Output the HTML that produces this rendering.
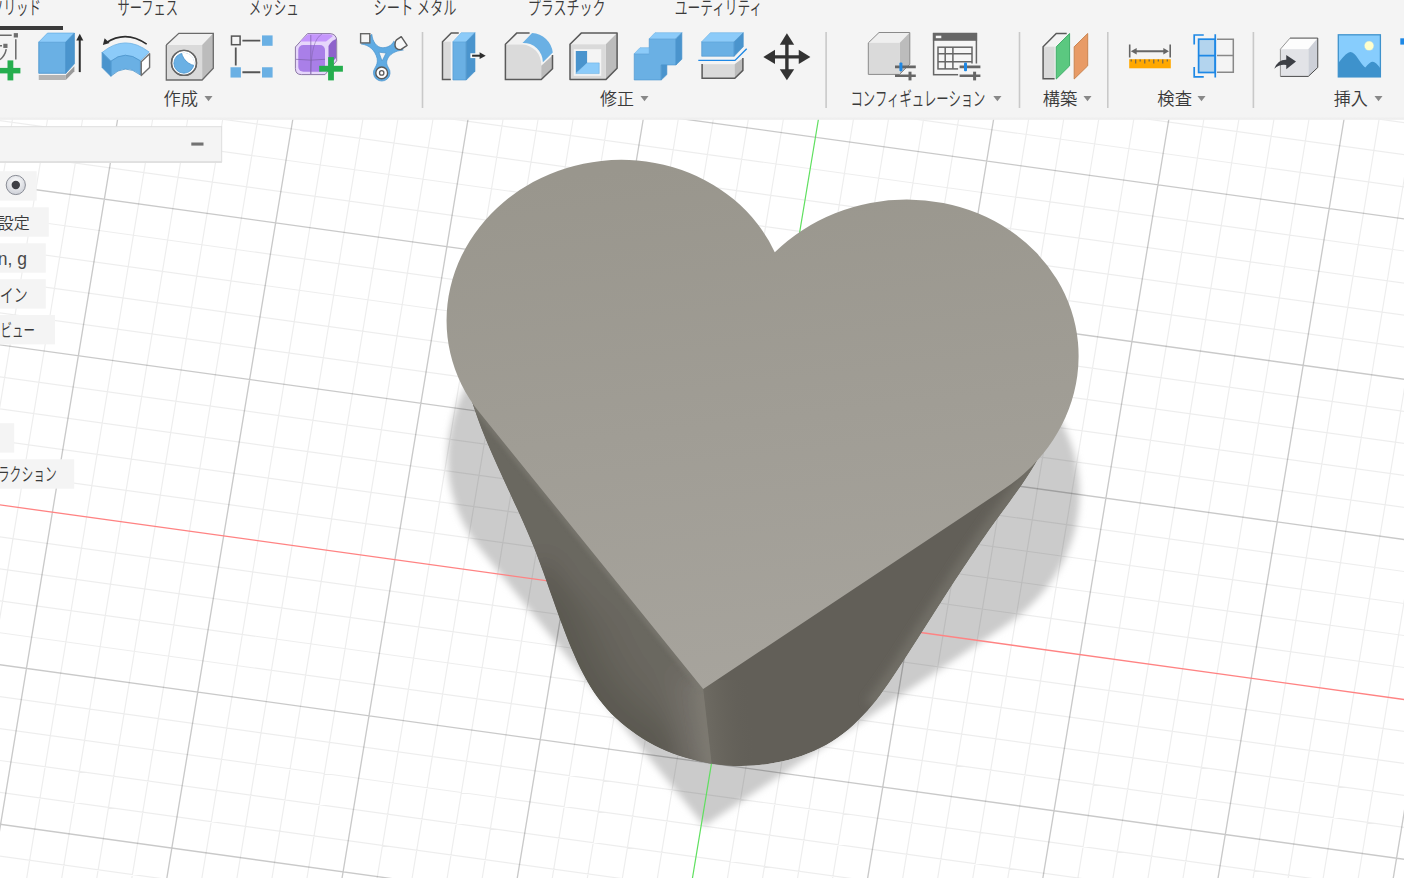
<!DOCTYPE html>
<html lang="ja"><head><meta charset="utf-8"><title>Fusion</title>
<style>html,body{margin:0;padding:0;background:#fff;overflow:hidden}svg{display:block}text{font-family:"Liberation Sans", "Noto Sans CJK JP", sans-serif;font-weight:350}</style></head><body>
<svg width="1404" height="878" viewBox="0 0 1404 878">
<defs>
<filter id="blur" x="-10%" y="-10%" width="120%" height="120%"><feGaussianBlur stdDeviation="3.8"/></filter>
<linearGradient id="topg" gradientUnits="userSpaceOnUse" x1="700" y1="160" x2="760" y2="690"><stop offset="0" stop-color="#99968d"/><stop offset="1" stop-color="#a7a49d"/></linearGradient>
<linearGradient id="sideL" gradientUnits="userSpaceOnUse" x1="520" y1="640" x2="705" y2="600"><stop offset="0" stop-color="#5d5a53"/><stop offset="0.25" stop-color="#6a675f"/><stop offset="0.8" stop-color="#6f6c64"/><stop offset="1" stop-color="#7a776f"/></linearGradient>
<linearGradient id="sideR" gradientUnits="userSpaceOnUse" x1="705" y1="700" x2="1000" y2="560"><stop offset="0" stop-color="#69665e"/><stop offset="0.3" stop-color="#625f58"/><stop offset="0.8" stop-color="#5f5c55"/><stop offset="1" stop-color="#6b6860"/></linearGradient>
<radialGradient id="radio" cx="0.5" cy="0.35" r="0.7"><stop offset="0" stop-color="#ffffff"/><stop offset="1" stop-color="#c9ccd4"/></radialGradient>
</defs>
<rect x="0.00" y="0.00" width="1404.00" height="878.00" fill="#ffffff"/>
<path d="M704.20 826.00 L480.53 549.58 A171.14 156.84 172.35 1 1 775.78 389.25 A160.45 176.63 82.21 1 1 1004.68 626.37 Z" fill="#cbcbcb" filter="url(#blur)"/>
<path d="M15.70 100L-114.28 883M50.74 100L-79.24 883M85.78 100L-44.20 883M155.86 100L25.88 883M190.90 100L60.92 883M225.94 100L95.96 883M260.98 100L131.00 883M331.06 100L201.08 883M366.10 100L236.12 883M401.14 100L271.16 883M436.18 100L306.20 883M506.26 100L376.28 883M541.30 100L411.32 883M576.34 100L446.36 883M611.38 100L481.40 883M681.46 100L551.48 883M716.50 100L586.52 883M751.54 100L621.56 883M786.58 100L656.60 883M856.66 100L726.68 883M891.70 100L761.72 883M926.74 100L796.76 883M961.78 100L831.80 883M1031.86 100L901.88 883M1066.90 100L936.92 883M1101.94 100L971.96 883M1136.98 100L1007.00 883M1207.06 100L1077.08 883M1242.10 100L1112.12 883M1277.14 100L1147.16 883M1312.18 100L1182.20 883M1382.26 100L1252.28 883M1417.30 100L1287.32 883M1452.34 100L1322.36 883M1487.38 100L1357.40 883M-5 -72.73L1409 123.25M-5 -40.61L1409 155.37M-5 -8.50L1409 187.48M-5 55.70L1409 251.68M-5 87.79L1409 283.77M-5 119.87L1409 315.85M-5 151.94L1409 347.92M-5 216.06L1409 412.04M-5 248.11L1409 444.09M-5 280.15L1409 476.13M-5 312.18L1409 508.16M-5 376.22L1409 572.20M-5 408.23L1409 604.21M-5 440.23L1409 636.21M-5 472.22L1409 668.20M-5 536.18L1409 732.16M-5 568.15L1409 764.13M-5 600.11L1409 796.09M-5 632.06L1409 828.04M-5 695.94L1409 891.92M-5 727.87L1409 923.85M-5 759.79L1409 955.77M-5 791.70L1409 987.68M-5 855.50L1409 1051.48" stroke="#000" stroke-opacity="0.07" stroke-width="1.2" fill="none"/>
<path d="M120.82 100L-9.16 883M296.02 100L166.04 883M471.22 100L341.24 883M646.42 100L516.44 883M996.82 100L866.84 883M1172.02 100L1042.04 883M1347.22 100L1217.24 883M1522.42 100L1392.44 883M-5 23.61L1409 219.59M-5 184.01L1409 379.99M-5 344.21L1409 540.19M-5 664.01L1409 859.99M-5 823.61L1409 1019.59" stroke="#000" stroke-opacity="0.21" stroke-width="1.35" fill="none"/>
<line x1="-5.00" y1="504.21" x2="1409.00" y2="700.19" stroke="#ff8383" stroke-width="1.3"/>
<line x1="821.62" y1="100.00" x2="691.64" y2="883.00" stroke="#5fe05f" stroke-width="1.2"/>
<clipPath id="clipB"><path d="M530.00 430.00 L470.50 396.00 L470.43 396.00 C471.11 398.18 473.08 404.74 474.52 409.07 C475.96 413.39 477.49 417.69 479.06 421.96 C480.64 426.23 482.29 430.48 483.98 434.71 C485.67 438.93 487.42 443.14 489.20 447.33 C490.98 451.52 492.82 455.70 494.67 459.86 C496.51 464.03 498.40 468.18 500.30 472.32 C502.19 476.47 504.11 480.60 506.03 484.74 C507.94 488.88 509.88 493.01 511.79 497.14 C513.70 501.28 515.62 505.41 517.51 509.55 C519.40 513.69 521.29 517.84 523.13 522.00 C524.97 526.15 526.80 530.32 528.57 534.50 C530.34 538.68 532.08 542.88 533.77 547.09 C535.45 551.31 537.08 555.54 538.69 559.78 C540.30 564.03 541.86 568.29 543.41 572.56 C544.96 576.83 546.48 581.11 548.00 585.39 C549.53 589.68 551.03 593.98 552.55 598.27 C554.08 602.57 555.59 606.87 557.14 611.17 C558.69 615.47 560.25 619.77 561.85 624.07 C563.46 628.36 565.08 632.66 566.77 636.94 C568.45 641.23 570.16 645.52 571.96 649.77 C573.76 654.02 575.61 658.27 577.56 662.44 C579.51 666.61 581.53 670.76 583.69 674.80 C585.84 678.84 588.09 682.83 590.48 686.68 C592.88 690.54 595.40 694.31 598.08 697.93 C600.76 701.55 603.60 705.04 606.58 708.40 C609.55 711.75 612.68 714.97 615.93 718.05 C619.18 721.13 622.58 724.07 626.08 726.87 C629.58 729.67 633.21 732.33 636.93 734.84 C640.66 737.35 644.50 739.72 648.42 741.94 C652.34 744.16 656.37 746.24 660.47 748.16 C664.57 750.08 668.76 751.86 673.00 753.48 C677.25 755.09 681.57 756.56 685.94 757.87 C690.31 759.18 694.75 760.34 699.22 761.34 C703.69 762.33 708.21 763.17 712.75 763.85 C717.29 764.52 721.87 765.04 726.46 765.39 C731.05 765.74 735.67 765.92 740.28 765.94 C744.89 765.96 749.53 765.81 754.13 765.49 C758.74 765.17 763.36 764.69 767.93 764.03 C772.50 763.37 777.06 762.54 781.56 761.54 C786.05 760.54 790.52 759.38 794.90 758.04 C799.28 756.70 803.62 755.19 807.84 753.51 C812.07 751.83 816.23 749.98 820.27 747.96 C824.30 745.94 828.25 743.75 832.05 741.39 C835.85 739.02 839.54 736.48 843.08 733.79 C846.62 731.09 850.02 728.21 853.30 725.20 C856.59 722.20 859.74 719.03 862.81 715.77 C865.88 712.51 868.83 709.10 871.71 705.63 C874.59 702.15 877.37 698.56 880.11 694.92 C882.84 691.28 885.49 687.54 888.11 683.78 C890.73 680.03 893.28 676.20 895.82 672.37 C898.36 668.55 900.86 664.68 903.35 660.82 C905.85 656.97 908.32 653.11 910.80 649.26 C913.27 645.41 915.73 641.56 918.19 637.71 C920.64 633.87 923.09 630.02 925.54 626.18 C927.99 622.34 930.44 618.51 932.88 614.68 C935.33 610.85 937.78 607.02 940.23 603.20 C942.68 599.38 945.13 595.57 947.59 591.76 C950.06 587.95 952.52 584.15 955.00 580.35 C957.48 576.56 959.96 572.77 962.46 568.99 C964.97 565.21 967.48 561.44 970.01 557.68 C972.54 553.92 975.08 550.17 977.65 546.42 C980.21 542.68 982.79 538.95 985.40 535.22 C988.01 531.50 990.63 527.79 993.29 524.09 C995.94 520.38 998.63 516.70 1001.32 513.01 C1004.01 509.33 1006.74 505.66 1009.43 501.96 C1012.12 498.27 1014.82 494.58 1017.45 490.85 C1020.08 487.12 1022.70 483.37 1025.22 479.58 C1027.74 475.78 1030.23 471.95 1032.59 468.06 C1034.94 464.16 1038.25 458.18 1039.38 456.20 L990.00 450.00 Z"/></clipPath>
<clipPath id="clipL"><path d="M0 100H636.35L727.15 900H0Z"/></clipPath>
<clipPath id="clipR"><path d="M1404 100H636.35L727.15 900H1404Z"/></clipPath>
<filter id="b6" filterUnits="userSpaceOnUse" x="380" y="330" width="760" height="520"><feGaussianBlur stdDeviation="6"/></filter>
<filter id="b12" filterUnits="userSpaceOnUse" x="380" y="330" width="760" height="520"><feGaussianBlur stdDeviation="13"/></filter>
<filter id="b4" filterUnits="userSpaceOnUse" x="380" y="330" width="760" height="520"><feGaussianBlur stdDeviation="4"/></filter>
<filter id="b2" filterUnits="userSpaceOnUse" x="380" y="330" width="760" height="520"><feGaussianBlur stdDeviation="2"/></filter>
<linearGradient id="bandL" gradientUnits="userSpaceOnUse" x1="707.3" y1="725" x2="655.3" y2="731"><stop offset="0" stop-color="#7d7a72" stop-opacity="1"/><stop offset="0.35" stop-color="#76736b" stop-opacity="0.75"/><stop offset="1" stop-color="#6c6961" stop-opacity="0"/></linearGradient>
<linearGradient id="bandR" gradientUnits="userSpaceOnUse" x1="707.3" y1="725" x2="753.3" y2="721"><stop offset="0" stop-color="#6d6a62" stop-opacity="1"/><stop offset="0.4" stop-color="#68655d" stop-opacity="0.7"/><stop offset="1" stop-color="#625f58" stop-opacity="0"/></linearGradient>
<g clip-path="url(#clipB)">
<path d="M530.00 430.00 L470.50 396.00 L470.43 396.00 C471.11 398.18 473.08 404.74 474.52 409.07 C475.96 413.39 477.49 417.69 479.06 421.96 C480.64 426.23 482.29 430.48 483.98 434.71 C485.67 438.93 487.42 443.14 489.20 447.33 C490.98 451.52 492.82 455.70 494.67 459.86 C496.51 464.03 498.40 468.18 500.30 472.32 C502.19 476.47 504.11 480.60 506.03 484.74 C507.94 488.88 509.88 493.01 511.79 497.14 C513.70 501.28 515.62 505.41 517.51 509.55 C519.40 513.69 521.29 517.84 523.13 522.00 C524.97 526.15 526.80 530.32 528.57 534.50 C530.34 538.68 532.08 542.88 533.77 547.09 C535.45 551.31 537.08 555.54 538.69 559.78 C540.30 564.03 541.86 568.29 543.41 572.56 C544.96 576.83 546.48 581.11 548.00 585.39 C549.53 589.68 551.03 593.98 552.55 598.27 C554.08 602.57 555.59 606.87 557.14 611.17 C558.69 615.47 560.25 619.77 561.85 624.07 C563.46 628.36 565.08 632.66 566.77 636.94 C568.45 641.23 570.16 645.52 571.96 649.77 C573.76 654.02 575.61 658.27 577.56 662.44 C579.51 666.61 581.53 670.76 583.69 674.80 C585.84 678.84 588.09 682.83 590.48 686.68 C592.88 690.54 595.40 694.31 598.08 697.93 C600.76 701.55 603.60 705.04 606.58 708.40 C609.55 711.75 612.68 714.97 615.93 718.05 C619.18 721.13 622.58 724.07 626.08 726.87 C629.58 729.67 633.21 732.33 636.93 734.84 C640.66 737.35 644.50 739.72 648.42 741.94 C652.34 744.16 656.37 746.24 660.47 748.16 C664.57 750.08 668.76 751.86 673.00 753.48 C677.25 755.09 681.57 756.56 685.94 757.87 C690.31 759.18 694.75 760.34 699.22 761.34 C703.69 762.33 708.21 763.17 712.75 763.85 C717.29 764.52 721.87 765.04 726.46 765.39 C731.05 765.74 735.67 765.92 740.28 765.94 C744.89 765.96 749.53 765.81 754.13 765.49 C758.74 765.17 763.36 764.69 767.93 764.03 C772.50 763.37 777.06 762.54 781.56 761.54 C786.05 760.54 790.52 759.38 794.90 758.04 C799.28 756.70 803.62 755.19 807.84 753.51 C812.07 751.83 816.23 749.98 820.27 747.96 C824.30 745.94 828.25 743.75 832.05 741.39 C835.85 739.02 839.54 736.48 843.08 733.79 C846.62 731.09 850.02 728.21 853.30 725.20 C856.59 722.20 859.74 719.03 862.81 715.77 C865.88 712.51 868.83 709.10 871.71 705.63 C874.59 702.15 877.37 698.56 880.11 694.92 C882.84 691.28 885.49 687.54 888.11 683.78 C890.73 680.03 893.28 676.20 895.82 672.37 C898.36 668.55 900.86 664.68 903.35 660.82 C905.85 656.97 908.32 653.11 910.80 649.26 C913.27 645.41 915.73 641.56 918.19 637.71 C920.64 633.87 923.09 630.02 925.54 626.18 C927.99 622.34 930.44 618.51 932.88 614.68 C935.33 610.85 937.78 607.02 940.23 603.20 C942.68 599.38 945.13 595.57 947.59 591.76 C950.06 587.95 952.52 584.15 955.00 580.35 C957.48 576.56 959.96 572.77 962.46 568.99 C964.97 565.21 967.48 561.44 970.01 557.68 C972.54 553.92 975.08 550.17 977.65 546.42 C980.21 542.68 982.79 538.95 985.40 535.22 C988.01 531.50 990.63 527.79 993.29 524.09 C995.94 520.38 998.63 516.70 1001.32 513.01 C1004.01 509.33 1006.74 505.66 1009.43 501.96 C1012.12 498.27 1014.82 494.58 1017.45 490.85 C1020.08 487.12 1022.70 483.37 1025.22 479.58 C1027.74 475.78 1030.23 471.95 1032.59 468.06 C1034.94 464.16 1038.25 458.18 1039.38 456.20 L990.00 450.00 Z" fill="#625f58"/>
<path d="M871.7 705.6 L880.1 694.9 L888.1 683.8 L895.8 672.4 L903.4 660.8 L910.8 649.3 L918.2 637.7 L925.5 626.2 L932.9 614.7 L940.2 603.2 L947.6 591.8 L955.0 580.4 L962.5 569.0 L970.0 557.7 L977.6 546.4 L985.4 535.2 L993.3 524.1 L1001.3 513.0 L1009.4 502.0 L1017.4 490.8 L1025.2 479.6 L1032.6 468.1 L1039.4 456.2" fill="none" stroke="#716e66" stroke-width="16" filter="url(#b4)" clip-path="url(#clipR)"/>
<rect x="701.2" y="680" width="60" height="100" fill="url(#bandR)" clip-path="url(#clipR)"/>
<g clip-path="url(#clipL)">
<g filter="url(#b12)">
<rect x="380" y="330" width="760" height="520" fill="#6b6860"/>
<path d="M572.0 649.8 L577.6 662.4 L583.7 674.8 L590.5 686.7 L598.1 697.9 L606.6 708.4 L615.9 718.1 L626.1 726.9 L636.9 734.8 L648.4 741.9 L660.5 748.2 L673.0 753.5 L685.9 757.9 L699.2 761.3" fill="none" stroke="#66635b" stroke-width="100" stroke-linejoin="round" stroke-linecap="round"/>
<path d="M557.1 611.2 L561.9 624.1 L566.8 636.9 L572.0 649.8 L577.6 662.4 L583.7 674.8 L590.5 686.7 L598.1 697.9 L606.6 708.4 L615.9 718.1 L626.1 726.9 L636.9 734.8 L648.4 741.9 L660.5 748.2 L673.0 753.5 L685.9 757.9 L699.2 761.3" fill="none" stroke="#615e57" stroke-width="56" stroke-linejoin="round" stroke-linecap="round"/>
<path d="M543.4 572.6 L548.0 585.4 L552.6 598.3 L557.1 611.2 L561.9 624.1 L566.8 636.9 L572.0 649.8 L577.6 662.4 L583.7 674.8 L590.5 686.7 L598.1 697.9 L606.6 708.4 L615.9 718.1 L626.1 726.9 L636.9 734.8 L648.4 741.9 L660.5 748.2 L673.0 753.5 L685.9 757.9 L699.2 761.3" fill="none" stroke="#5a5750" stroke-width="24" stroke-linejoin="round" stroke-linecap="round"/>
<path d="M701.6 675.0 L712.3 769.0" fill="none" stroke="#74716a" stroke-width="60"/>
</g>
<g filter="url(#b4)">
<path d="M702.3 681.0 L712.3 769.0" fill="none" stroke="#7a776f" stroke-width="26" opacity="0.75"/>
<path d="M702.7 685.0 L712.3 769.0" fill="none" stroke="#7e7b73" stroke-width="9" opacity="0.9"/>
</g>
<path d="M462 390 L703.2 689.0" fill="none" stroke="#7d7a72" stroke-width="8" filter="url(#b2)" opacity="0.7"/>
</g></g>
<path d="M703.20 689.00 L479.53 412.58 A171.14 156.84 172.35 1 1 774.78 252.25 A160.45 176.63 82.21 1 1 1003.68 489.37 Z" fill="url(#topg)"/>
<rect x="-1.00" y="126.70" width="222.70" height="35.00" fill="#f4f4f4" stroke="#dedede" stroke-width="1"/>
<rect x="-1.00" y="161.10" width="222.90" height="1.90" fill="#e0e0e0"/>
<rect x="191.30" y="142.50" width="12.20" height="3.10" fill="#727272"/>
<rect x="0.00" y="171.20" width="36.70" height="29.40" fill="#f4f4f4"/>
<rect x="0.00" y="207.30" width="48.80" height="29.40" fill="#f4f4f4"/>
<rect x="0.00" y="243.30" width="45.80" height="29.40" fill="#f4f4f4"/>
<rect x="0.00" y="279.20" width="45.80" height="29.40" fill="#f4f4f4"/>
<rect x="0.00" y="315.00" width="55.00" height="29.40" fill="#f4f4f4"/>
<rect x="0.00" y="423.20" width="14.20" height="29.40" fill="#f4f4f4"/>
<rect x="0.00" y="459.30" width="74.20" height="29.40" fill="#f4f4f4"/>
<circle cx="15.8" cy="185" r="9.6" fill="url(#radio)" stroke="#8a8d96" stroke-width="1"/>
<circle cx="15.8" cy="185" r="4.2" fill="#3f4046"/>
<text x="29.7" y="229.0" font-size="16" fill="#3a3a3a" text-anchor="end">設定</text>
<text x="26.9" y="264.8" font-size="17.5" fill="#484848" text-anchor="end">n, g</text>
<text x="27.7" y="301.8" font-size="18.5" fill="#3a3a3a" text-anchor="end" textLength="42.0" lengthAdjust="spacingAndGlyphs">ザイン</text>
<text x="35.0" y="337.0" font-size="18.5" fill="#3a3a3a" text-anchor="end" textLength="34.5" lengthAdjust="spacingAndGlyphs">ビュー</text>
<text x="56.8" y="481.3" font-size="18.5" fill="#3a3a3a" text-anchor="end" textLength="59.0" lengthAdjust="spacingAndGlyphs">ラクション</text>
<rect x="0.00" y="0.00" width="1404.00" height="119.60" fill="#f4f4f4"/>
<linearGradient id="tbsh" x1="0" y1="0" x2="0" y2="1"><stop offset="0" stop-color="#f4f4f4"/><stop offset="1" stop-color="#ececec"/></linearGradient>
<rect x="0.00" y="116.50" width="1404.00" height="3.10" fill="url(#tbsh)"/>
<rect x="0.00" y="26.00" width="63.00" height="4.00" fill="#3a3a3a"/>
<text x="41.0" y="15.4" font-size="19" fill="#3a3a3a" text-anchor="end" textLength="50.0" lengthAdjust="spacingAndGlyphs">ソリッド</text>
<text x="117.5" y="15.4" font-size="19" fill="#3a3a3a" text-anchor="start" textLength="60.5" lengthAdjust="spacingAndGlyphs">サーフェス</text>
<text x="248.8" y="15.4" font-size="19" fill="#3a3a3a" text-anchor="start" textLength="50.0" lengthAdjust="spacingAndGlyphs">メッシュ</text>
<text x="373.5" y="15.4" font-size="19" fill="#3a3a3a" text-anchor="start" textLength="83.0" lengthAdjust="spacingAndGlyphs">シート メタル</text>
<text x="527.7" y="15.4" font-size="19" fill="#3a3a3a" text-anchor="start" textLength="77.7" lengthAdjust="spacingAndGlyphs">プラスチック</text>
<text x="674.8" y="15.4" font-size="19" fill="#3a3a3a" text-anchor="start" textLength="87.4" lengthAdjust="spacingAndGlyphs">ユーティリティ</text>
<path d="M422.5 32V108" stroke="#c9c9c9" stroke-width="1.6"/>
<path d="M826.1 32V108" stroke="#c9c9c9" stroke-width="1.6"/>
<path d="M1019.5 32V108" stroke="#c9c9c9" stroke-width="1.6"/>
<path d="M1107.8 32V108" stroke="#c9c9c9" stroke-width="1.6"/>
<path d="M1253.4 32V108" stroke="#c9c9c9" stroke-width="1.6"/>
<text x="163.5" y="105.0" font-size="17" fill="#3a3a3a" text-anchor="start" textLength="34.5" lengthAdjust="spacingAndGlyphs">作成</text>
<polygon points="204.50,96.00 212.50,96.00 208.50,101.30" fill="#888"/>
<text x="600.0" y="105.0" font-size="17" fill="#3a3a3a" text-anchor="start" textLength="34.0" lengthAdjust="spacingAndGlyphs">修正</text>
<polygon points="640.50,96.00 648.50,96.00 644.50,101.30" fill="#888"/>
<text x="850.5" y="105.6" font-size="19.5" fill="#3a3a3a" text-anchor="start" textLength="135.0" lengthAdjust="spacingAndGlyphs">コンフィギュレーション</text>
<polygon points="993.30,96.00 1001.50,96.00 997.40,101.30" fill="#888"/>
<text x="1042.8" y="105.0" font-size="17" fill="#3a3a3a" text-anchor="start" textLength="34.6" lengthAdjust="spacingAndGlyphs">構築</text>
<polygon points="1083.50,96.00 1091.50,96.00 1087.50,101.30" fill="#888"/>
<text x="1157.3" y="105.0" font-size="17" fill="#3a3a3a" text-anchor="start" textLength="34.7" lengthAdjust="spacingAndGlyphs">検査</text>
<polygon points="1197.50,96.00 1205.50,96.00 1201.50,101.30" fill="#888"/>
<text x="1333.7" y="105.0" font-size="17" fill="#3a3a3a" text-anchor="start" textLength="34.1" lengthAdjust="spacingAndGlyphs">挿入</text>
<polygon points="1374.50,96.00 1382.50,96.00 1378.50,101.30" fill="#888"/>
<path d="M0 35.3H11.7M15.8 39.2V59.6M0 45.8H2" stroke="#6a6a6a" stroke-width="1.5" fill="none"/>
<path d="M6.25 49.2Q5 56 0 59.6" stroke="#6a6a6a" stroke-width="1.5" fill="none"/>
<rect x="13.75" y="33.10" width="4.20" height="4.40" fill="#6f6f6f"/>
<rect x="3.30" y="43.75" width="4.20" height="4.20" fill="#6f6f6f"/>
<rect x="0.00" y="67.90" width="20.40" height="5.50" fill="#25ae4e"/>
<rect x="7.50" y="60.40" width="5.80" height="20.00" fill="#25ae4e"/>
<polygon points="38.75,75.00 65.80,75.00 65.80,80.00 38.75,80.00" fill="#b4b4b4"/>
<polygon points="65.80,75.00 74.40,66.25 74.40,71.25 65.80,80.00" fill="#9a9a9a"/>
<polygon points="38.75,42.10 65.80,42.10 65.80,73.30 38.75,73.30" fill="#6ab0e4" stroke="#4a94cd" stroke-width="0.8" stroke-linejoin="round"/>
<polygon points="38.75,42.10 47.50,33.10 74.40,33.10 65.80,42.10" fill="#8ccbf9" stroke="#6ab0e4" stroke-width="0.8" stroke-linejoin="round"/>
<polygon points="65.80,42.10 74.40,33.10 74.40,63.75 65.80,73.30" fill="#4a94cd" stroke="#4a94cd" stroke-width="0.8" stroke-linejoin="round"/>
<path d="M79.75 39.5V72.1" stroke="#2d2d2d" stroke-width="2"/>
<polygon points="79.75,33.75 76.25,40.40 83.30,40.40" fill="#2d2d2d"/>
<path d="M146.7 44.2Q126 29.8 106 42.8" stroke="#2d2d2d" stroke-width="1.6" fill="none"/>
<polygon points="102.90,45.00 104.60,38.30 109.60,42.90" fill="#2d2d2d"/>
<path d="M102.1 52.5Q125 33.5 149.2 52.1L140.4 60.8Q125 49.5 110.8 61.25Z" fill="#8ccbf9" stroke="#6ab0e4" stroke-width="0.8"/>
<path d="M110.8 61.25Q125 49.5 140.4 60.8V75Q125 62.5 110.8 76.25Z" fill="#6ab0e4" stroke="#4a94cd" stroke-width="0.8"/>
<polygon points="102.10,52.50 110.80,61.25 110.80,76.25 102.10,67.50" fill="#4a94cd" stroke="#4a94cd" stroke-width="0.8" stroke-linejoin="round"/>
<polygon points="141.25,61.70 149.60,53.75 149.60,67.50 141.25,75.40" fill="#ffffff" stroke="#6f6f6f" stroke-width="1.4" stroke-linejoin="round"/>
<polygon points="166.30,45.00 178.80,33.30 213.30,33.30 202.10,45.00" fill="#f1f1f1"/>
<polygon points="202.10,45.00 213.30,33.30 213.30,68.30 202.10,80.00" fill="#bcbcbc"/>
<polygon points="166.30,45.00 202.10,45.00 202.10,80.00 166.30,80.00" fill="#dadada"/>
<polyline points="166.30,45.00 178.80,33.30 213.30,33.30 213.30,68.30 202.10,80.00 166.30,80.00 166.30,45.00" fill="none" stroke="#6a6a6a" stroke-width="1.3" stroke-linejoin="miter"/>
<circle cx="184" cy="62.9" r="12.5" fill="#fff" stroke="#666" stroke-width="1.4"/>
<clipPath id="holec"><circle cx="183.9" cy="63.2" r="10.5"/></clipPath>
<circle cx="183.9" cy="63.2" r="10.0" fill="#6ab0e4" stroke="#4a94cd" stroke-width="0.8"/>
<circle cx="197.8" cy="49.2" r="16.7" fill="#fff" stroke="#4a94cd" stroke-width="0.8" clip-path="url(#holec)"/>
<circle cx="184" cy="62.9" r="12.5" fill="none" stroke="#666" stroke-width="1.4"/>
<rect x="231.50" y="36.10" width="8.60" height="8.60" fill="#f5f5f5" stroke="#555" stroke-width="1.5"/>
<rect x="262.00" y="35.40" width="10.60" height="10.40" fill="#6ab0e4"/>
<rect x="230.50" y="67.25" width="10.40" height="10.30" fill="#6ab0e4"/>
<rect x="262.00" y="67.25" width="10.60" height="10.30" fill="#6ab0e4"/>
<path d="M242.4 40.6H260.3M235.75 47.5V65.4M242.4 72.25H260.3" stroke="#555" stroke-width="1.8" fill="none"/>
<path d="M295.4 47L307.5 33.6H330Q336.7 34 336.7 41V60.8L325 74.6H301.5Q295.4 74.6 295.4 68.5Z" fill="#e6d6fb" stroke="#8b78a4" stroke-width="1"/>
<path d="M300 41.5L308 34.2H329Q331 34.3 333 36L326 41.5Z" fill="#c596fd"/>
<path d="M328.5 46Q331 41 336 39V58L328.5 66Z" fill="#8d62cb"/>
<rect x="298.30" y="45.00" width="26.70" height="26.70" fill="#a97fe8" rx="5"/>
<path d="M310.8 35V74M296 59.3Q311 61 325 59.3" stroke="#7d62a8" stroke-width="0.9" fill="none" opacity="0.8"/>
<path d="M310.8 74Q311 40 322 34" stroke="#7d62a8" stroke-width="0.9" fill="none" opacity="0.6"/>
<rect x="319.20" y="65.80" width="23.70" height="5.90" fill="#25ae4e"/>
<rect x="328.10" y="57.10" width="5.80" height="23.30" fill="#25ae4e"/>
<path fill-rule="evenodd" d="M361.25 44C369.17 45 375 50 377.08 58.33C377.92 62.5 376.67 65 375 67.92A8.3 8.3 0 1 0 388.5 67.92C386.67 65 386.25 62.5 387.08 60C389.17 54.17 395 50.83 403.33 50L393.75 41.25C391.67 45.83 386.67 47.92 382.08 47.67C376.67 47.33 372.5 41.67 371.83 34.33ZM378.9 52.2L386.1 53L382.1 61Z" fill="#5fabe3" stroke="#4a94cd" stroke-width="0.7"/>
<rect x="360.60" y="33.70" width="9.20" height="9.20" fill="#f5f5f5" stroke="#666" stroke-width="1.4"/>
<path d="M401.25 36.7L407.1 45.4L400.8 49.6Q394.5 49.5 395 44.2Q395.2 41 396.5 39.8Z" fill="#f8f8f8" stroke="#5a5a5a" stroke-width="1.4" stroke-linejoin="round"/>
<circle cx="381.7" cy="72.9" r="5.9" fill="#fff" stroke="#5a5a5a" stroke-width="1.4"/>
<circle cx="381.7" cy="72.9" r="2.2" fill="#fff" stroke="#5a5a5a" stroke-width="1.3"/>
<polygon points="443.20,41.70 451.25,33.50 458.75,33.50 451.00,41.70" fill="#f1f1f1"/>
<rect x="443.20" y="41.70" width="7.60" height="37.90" fill="#dadada"/>
<polyline points="450.80,79.60 442.50,79.60 442.50,41.70 451.25,32.90 458.75,32.90" fill="none" stroke="#5a5a5a" stroke-width="1.5" stroke-linejoin="miter"/>
<polygon points="452.90,41.70 466.25,41.70 466.25,80.00 452.90,80.00" fill="#6ab0e4" stroke="#4a94cd" stroke-width="0.6" stroke-linejoin="round"/>
<polygon points="452.90,41.70 461.25,32.70 475.00,32.70 466.25,41.70" fill="#8ccbf9" stroke="#6ab0e4" stroke-width="0.6" stroke-linejoin="round"/>
<polygon points="466.25,41.70 475.00,32.70 475.00,71.25 466.25,80.00" fill="#4a94cd" stroke="#4a94cd" stroke-width="0.6" stroke-linejoin="round"/>
<rect x="470.40" y="53.30" width="5.50" height="4.80" fill="#fafafa"/>
<path d="M472.1 55.7H480.5" stroke="#2d2d2d" stroke-width="2"/>
<polygon points="479.60,52.30 485.70,55.70 479.60,59.00" fill="#2d2d2d"/>
<polygon points="505.40,44.30 516.70,33.10 532.00,33.10 522.50,44.30" fill="#f1f1f1"/>
<path d="M505.4 44.6H522.5A19.5 20 0 0 1 541.25 65V79.6H505.4Z" fill="#dadada"/>
<polygon points="541.25,65.80 552.50,55.40 552.50,68.75 541.25,79.60" fill="#bcbcbc"/>
<path d="M522.5 42.9L532.1 32.9A22 22 0 0 1 552.75 52.5L542.9 62.3A19.5 19.5 0 0 0 522.5 42.9Z" fill="#6ab0e4"/>
<polyline points="529.60,33.10 516.70,33.10 505.40,44.30 505.40,79.60 541.25,79.60 552.50,68.75 552.50,55.00" fill="none" stroke="#5a5a5a" stroke-width="1.5" stroke-linejoin="miter"/>
<polygon points="570.00,44.30 581.25,33.10 617.10,33.10 605.80,44.30" fill="#f1f1f1"/>
<polygon points="605.80,44.30 617.10,33.10 617.10,68.30 605.80,79.60" fill="#bcbcbc"/>
<rect x="570.00" y="44.30" width="35.80" height="35.30" fill="#dadada"/>
<rect x="573.75" y="49.20" width="27.50" height="26.60" fill="#f4f4f4"/>
<polygon points="575.80,51.00 587.10,51.00 587.10,62.90 575.80,73.60" fill="#4a94cd"/>
<polygon points="587.10,62.90 599.20,62.90 599.20,73.60 575.80,73.60" fill="#8ccbf9" stroke="#6ab0e4" stroke-width="0.6" stroke-linejoin="round"/>
<polygon points="570.00,44.30 581.25,33.10 617.10,33.10 617.10,68.30 605.80,79.60 570.00,79.60" fill="none" stroke="#5a5a5a" stroke-width="1.5" stroke-linejoin="round"/>
<polygon points="634.20,53.75 649.20,53.75 649.20,38.75 676.00,38.75 676.00,65.00 661.25,65.00 661.25,80.00 634.20,80.00" fill="#6ab0e4" stroke="#4a94cd" stroke-width="0.6" stroke-linejoin="round"/>
<polygon points="649.20,38.75 655.00,32.70 681.90,32.70 676.00,38.75" fill="#8ccbf9" stroke="#6ab0e4" stroke-width="0.6" stroke-linejoin="round"/>
<polygon points="634.20,53.75 640.00,47.70 649.20,47.70 649.20,53.75" fill="#8ccbf9" stroke="#6ab0e4" stroke-width="0.6" stroke-linejoin="round"/>
<polygon points="676.00,38.75 681.90,32.70 681.90,59.20 676.00,65.00" fill="#4a94cd" stroke="#4a94cd" stroke-width="0.6" stroke-linejoin="round"/>
<polygon points="661.25,65.00 666.90,65.00 666.90,74.60 661.25,80.00" fill="#4a94cd" stroke="#4a94cd" stroke-width="0.6" stroke-linejoin="round"/>
<polygon points="701.70,41.70 734.20,41.70 734.20,56.25 701.70,56.25" fill="#6ab0e4" stroke="#4a94cd" stroke-width="0.6" stroke-linejoin="round"/>
<polygon points="701.70,41.70 710.40,32.70 743.30,32.70 734.20,41.70" fill="#8ccbf9" stroke="#6ab0e4" stroke-width="0.6" stroke-linejoin="round"/>
<polygon points="734.20,41.70 743.30,32.70 743.30,46.70 734.20,56.25" fill="#4a94cd" stroke="#4a94cd" stroke-width="0.6" stroke-linejoin="round"/>
<polyline points="698.30,60.40 735.00,60.40 746.70,48.75" fill="none" stroke="#1e88e5" stroke-width="1.4" stroke-linejoin="miter"/>
<rect x="702.10" y="64.20" width="32.50" height="14.10" fill="#dadada"/>
<polygon points="734.60,64.20 742.90,57.90 742.90,70.40 734.60,78.30" fill="#bcbcbc"/>
<polyline points="702.10,64.00 702.10,78.30 734.80,78.30 742.90,70.40 742.90,58.00" fill="none" stroke="#5a5a5a" stroke-width="1.5" stroke-linejoin="miter"/>
<path d="M786.9 44V70M774 56.9H800" stroke="#333" stroke-width="3.4"/>
<polygon points="786.90,33.30 779.80,44.80 794.20,44.80" fill="#333"/>
<polygon points="786.90,80.25 779.80,69.20 794.20,69.20" fill="#333"/>
<polygon points="763.30,56.90 775.00,49.80 775.00,64.00" fill="#333"/>
<polygon points="810.40,56.90 798.75,49.80 798.75,64.00" fill="#333"/>
<polygon points="868.30,42.90 879.00,32.50 909.80,32.50 899.60,42.90" fill="#efefef"/>
<polygon points="899.60,42.90 909.80,32.50 909.80,64.20 899.60,74.40" fill="#bcbcbc"/>
<rect x="868.30" y="42.90" width="31.30" height="31.50" fill="#dadada"/>
<polygon points="868.30,42.90 879.00,32.50 909.80,32.50 909.80,64.20 899.60,74.40 868.30,74.40" fill="none" stroke="#8a8a8a" stroke-width="1" stroke-linejoin="round"/>
<path d="M895.00 66.9H915.80M895.00 75.8H915.80" stroke="#666" stroke-width="2.6"/>
<rect x="899.40" y="62.50" width="3.00" height="8.75" fill="#1e88e5" rx="1"/>
<rect x="933.60" y="33.60" width="42.80" height="41.10" fill="#f6f6f6" stroke="#666" stroke-width="1.5"/>
<rect x="932.90" y="32.90" width="44.20" height="7.90" fill="#666"/>
<rect x="935.80" y="35.70" width="5.50" height="2.50" fill="#f6f6f6"/>
<rect x="938.00" y="47.20" width="34.00" height="21.70" fill="none" stroke="#666" stroke-width="1.5"/>
<path d="M945.2 47V69M952.9 47V69M938 53.75H972M938 61.7H972" stroke="#666" stroke-width="1.5" fill="none"/>
<rect x="908.50" y="71.70" width="3.00" height="8.70" fill="#666"/>
<rect x="958.10" y="63.50" width="24.00" height="18.50" fill="#f4f4f4"/>
<path d="M959.60 66.9H980.40M959.60 75.8H980.40" stroke="#666" stroke-width="2.6"/>
<rect x="964.00" y="62.50" width="3.00" height="8.75" fill="#1e88e5" rx="1"/>
<rect x="973.10" y="71.70" width="3.00" height="8.70" fill="#666"/>
<polygon points="1043.75,46.70 1056.25,34.00 1066.70,34.00 1054.60,46.70" fill="#f3f3f3"/>
<rect x="1043.75" y="46.70" width="10.90" height="31.60" fill="#dadada"/>
<polyline points="1054.60,78.75 1043.10,78.75 1043.10,46.70 1056.25,33.50 1066.70,33.50" fill="none" stroke="#5a5a5a" stroke-width="1.5" stroke-linejoin="miter"/>
<polygon points="1056.25,46.80 1069.60,33.50 1069.60,65.80 1056.25,79.00" fill="#5bc880" stroke="#3fae68" stroke-width="1" stroke-linejoin="round"/>
<polygon points="1074.20,46.80 1087.70,33.50 1087.70,65.80 1074.20,79.00" fill="#e89b66" stroke="#c98450" stroke-width="1" stroke-linejoin="round"/>
<rect x="1129.20" y="59.20" width="41.60" height="9.10" fill="#ffa800"/>
<path d="M1131.25 59.6V61.60M1135.67 59.6V63.50M1140.17 59.6V61.60M1144.75 59.6V63.50M1149.17 59.6V61.60M1153.75 59.6V63.50M1158.33 59.6V61.60M1162.75 59.6V63.50M1167.33 59.6V61.60" stroke="#7a6a4a" stroke-width="1.3"/>
<path d="M1129.7 44.6V57.5M1170.2 44.6V57.5" stroke="#666" stroke-width="1.6"/>
<path d="M1135 51.25H1165" stroke="#666" stroke-width="2"/>
<polygon points="1130.80,51.25 1136.70,47.90 1136.70,54.60" fill="#666"/>
<polygon points="1169.00,51.25 1163.30,47.90 1163.30,54.60" fill="#666"/>
<path d="M1217 39.2H1233.3V72.25H1217M1217 55.6H1233.3" stroke="#888" stroke-width="1.5" fill="none"/>
<rect x="1198.60" y="39.20" width="16.60" height="33.30" fill="#b3d4ee" stroke="#1e88e5" stroke-width="1.7"/>
<path d="M1198.6 55.6H1215.25M1215.25 34.2V77.5M1203.75 35H1194.2V44.6M1194.2 67.1V76.8H1203.75" stroke="#1e88e5" stroke-width="1.7" fill="none"/>
<polygon points="1280.40,49.20 1290.00,38.10 1317.75,38.10 1308.30,49.20" fill="#fdfdfd"/>
<polygon points="1308.30,49.20 1317.75,38.10 1317.75,67.50 1308.30,76.40" fill="#cdd0d8"/>
<rect x="1280.40" y="49.20" width="27.90" height="27.20" fill="#e2e3e7"/>
<polyline points="1290.00,38.10 1317.75,38.10 1317.75,67.50 1308.30,76.40 1280.40,76.40" fill="none" stroke="#4a4a4a" stroke-width="1" stroke-linejoin="miter"/>
<polyline points="1280.40,76.40 1280.40,49.20 1290.00,38.10" fill="none" stroke="#8a8a8a" stroke-width="0.9" stroke-linejoin="miter"/>
<path d="M1274.2 68.75Q1278 59.5 1286.25 59.8V55L1296 61.4L1286.25 69.2V65Q1279.5 64 1274.2 68.75Z" fill="#3c3f45"/>
<rect x="1338.30" y="34.80" width="42.10" height="42.10" fill="#87cdfd" stroke="#3e92cc" stroke-width="1.3"/>
<path d="M1338.7 62.5Q1347 52 1350.3 52.1Q1354 52 1359 60Q1363 66 1365.3 67.5Q1370 61.5 1372.8 61.7Q1376 62 1380.3 68.3V77H1338.7Z" fill="#3e92cc"/>
<circle cx="1369.1" cy="45.8" r="4.8" fill="#ffffcc" stroke="#9ed0ee" stroke-width="0.5"/>
<rect x="1400.30" y="38.30" width="4.00" height="6.30" fill="#1e88e5"/>
</svg></body></html>
